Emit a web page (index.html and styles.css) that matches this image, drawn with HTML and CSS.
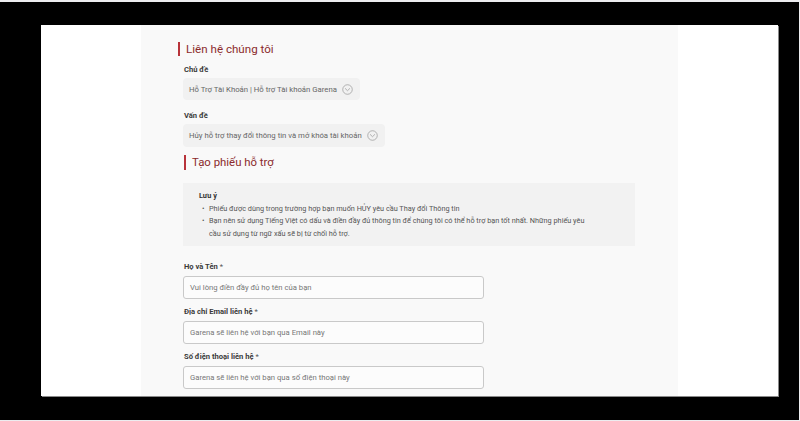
FILE: index.html
```html
<!DOCTYPE html>
<html lang="vi">
<head>
<meta charset="utf-8">
<title>Liên hệ chúng tôi</title>
<link rel="stylesheet" href="styles.css">
</head>
<body>
<div class="frame">
  <div class="screen">
    <main class="page">
      <h2 class="title title-first">Liên hệ chúng tôi</h2>

      <div class="field first-field">
        <div class="label">Chủ đề</div>
        <div class="select">
          <span>Hỗ Trợ Tài Khoản | Hỗ trợ Tài khoản Garena</span>
          <svg class="chev" viewBox="0 0 12 12" width="11" height="11"><circle cx="6" cy="6" r="5.2" fill="none" stroke="#9a9a9a" stroke-width="0.8"/><path d="M3.6 5 L6 7.3 L8.4 5" fill="none" stroke="#9a9a9a" stroke-width="0.8" stroke-linecap="round" stroke-linejoin="round"/></svg>
        </div>
      </div>

      <div class="field second-field">
        <div class="label">Vấn đề</div>
        <div class="select select-tall">
          <span>Hủy hỗ trợ thay đổi thông tin và mở khóa tài khoản</span>
          <svg class="chev" viewBox="0 0 12 12" width="11" height="11"><circle cx="6" cy="6" r="5.2" fill="none" stroke="#9a9a9a" stroke-width="0.8"/><path d="M3.6 5 L6 7.3 L8.4 5" fill="none" stroke="#9a9a9a" stroke-width="0.8" stroke-linecap="round" stroke-linejoin="round"/></svg>
        </div>
      </div>

      <h2 class="title title-second">Tạo phiếu hỗ trợ</h2>

      <section class="note">
        <div class="note-head">Lưu ý</div>
        <ul class="note-list">
          <li><span class="dot">•</span><span>Phiếu được dùng trong trường hợp bạn muốn HỦY yêu cầu Thay đổi Thông tin</span></li>
          <li><span class="dot">•</span><span>Bạn nên sử dụng Tiếng Việt có dấu và điền đầy đủ thông tin để chúng tôi có thể hỗ trợ bạn tốt nhất. Những phiếu yêu<br>cầu sử dụng từ ngữ xấu sẽ bị từ chối hỗ trợ.</span></li>
        </ul>
      </section>

      <div class="field input-field first-input">
        <div class="label">Họ và Tên <span class="req">*</span></div>
        <div class="input">Vui lòng điền đầy đủ họ tên của bạn</div>
      </div>

      <div class="field input-field">
        <div class="label">Địa chỉ Email liên hệ <span class="req">*</span></div>
        <div class="input">Garena sẽ liên hệ với bạn qua Email này</div>
      </div>

      <div class="field input-field">
        <div class="label">Số điện thoại liên hệ <span class="req">*</span></div>
        <div class="input">Garena sẽ liên hệ với bạn qua số điện thoại này</div>
      </div>
    </main>
  </div>
</div>
</body>
</html>
```

FILE: styles.css
```css
html, body {
  margin: 0;
  padding: 0;
}
body {
  width: 800px;
  height: 421px;
  overflow: hidden;
  background: #ececef;
  font-family: Roboto, "Noto Sans", "Liberation Sans", sans-serif;
}
.frame {
  box-sizing: border-box;
  margin: 2px 1px 0 0;
  height: 418px;
  background: #000;
  padding: 23px 0 0 41px;
}
.screen {
  width: 737px;
  height: 371px;
  background: #fff;
  display: flex;
  box-shadow: 1px 1px 0 #8a8a8a;
  overflow: hidden;
}
.page {
  box-sizing: border-box;
  margin-left: 100px;
  width: 537px;
  height: 100%;
  background: #f9f9f9;
  padding: 17px 0 0 42px;
  display: flex;
  flex-direction: column;
  align-items: flex-start;
}
.title {
  margin: 0;
  font-size: 11.6px;
  font-weight: 400;
  color: #8b2a2c;
  border-left: 2px solid #b8333a;
  padding-left: 6px;
  height: 14px;
  line-height: 14px;
}
.title-first {
  margin-left: -5px;
}
.title-second {
  margin-left: 1px;
  margin-top: 8px;
  height: 15px;
  line-height: 15px;
  font-size: 11.4px;
}
.field {
  display: flex;
  flex-direction: column;
  align-items: flex-start;
  gap: 3px;
}
.first-field {
  margin-top: 9px;
}
.second-field {
  margin-top: 11px;
}
.label {
  font-size: 7.6px;
  font-weight: 700;
  color: #3a3a3a;
  line-height: 10px;
  padding-left: 1px;
}
.req {
  font-weight: 400;
  color: #555;
}
.select {
  box-sizing: border-box;
  height: 22px;
  display: flex;
  align-items: center;
  gap: 5px;
  padding: 0 7px 0 6px;
  background: #f1f1f1;
  border-radius: 4px;
  font-size: 7.75px;
  color: #666;
}
.select-tall {
  height: 23px;
}
.chev {
  display: block;
  flex: none;
}
.note {
  box-sizing: border-box;
  margin-top: 13px;
  width: 452px;
  height: 63px;
  background: #f2f2f2;
  padding: 7px 10px 0 16px;
  font-size: 7.3px;
  line-height: 12.5px;
  color: #555;
}
.note-head {
  font-weight: 700;
  color: #333;
}
.note-list {
  list-style: none;
  margin: 0;
  padding: 0 0 0 3px;
}
.note-list li {
  display: flex;
}
.dot {
  flex: none;
  width: 7px;
}
.input-field {
  margin-top: 8.5px;
  gap: 3.5px;
}
.first-input {
  margin-top: 16px;
}
.input {
  box-sizing: border-box;
  width: 301px;
  height: 23px;
  border: 1px solid #c9c9c9;
  border-radius: 3px;
  background: #fcfcfc;
  padding-left: 6px;
  display: flex;
  align-items: center;
  font-size: 7.7px;
  color: #777;
}
```
